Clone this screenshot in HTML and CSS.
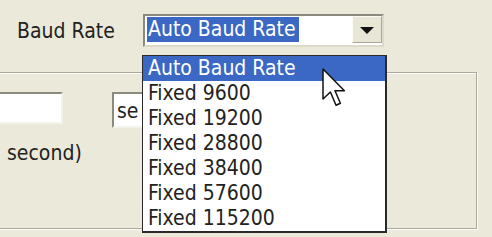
FILE: index.html
```html
<!DOCTYPE html>
<html lang="en">
<head>
    <meta charset="UTF-8">
    <title>Baud Rate</title>
    <link rel="stylesheet" href="styles.css">
</head>
<body>
    <div class="window">
        <div class="field-row">
            <span class="label">Baud Rate</span>
            <div class="combo">
                <div class="combo-text"><span class="selected">Auto Baud Rate</span></div>
                <div class="combo-btn"><span class="arrow"></span></div>
                <ul class="combo-list">
                    <li class="active">Auto Baud Rate</li>
                    <li>Fixed 9600</li>
                    <li>Fixed 19200</li>
                    <li>Fixed 28800</li>
                    <li>Fixed 38400</li>
                    <li>Fixed 57600</li>
                    <li>Fixed 115200</li>
                </ul>
            </div>
        </div>

        <div class="group">
            <div class="inputs">
                <div class="textbox"></div>
                <div class="selectbox">se</div>
            </div>
            <div class="units">second)</div>
        </div>

        <svg class="cursor" width="24" height="40" viewBox="0 0 12 20">
            <polygon points="0.5,0.5 0.5,15.5 4.2,12 7,18.6 9.2,17.6 6.5,11.4 11.2,11.4" fill="#fff" stroke="#111" stroke-width="0.75" stroke-linejoin="round"/>
        </svg>
    </div>
</body>
</html>
```

FILE: styles.css
```css
body {
    margin: 0;
    background: #ebe9d9;
    font-family: "DejaVu Sans Condensed", "Liberation Sans", sans-serif;
    font-size: 21px;
    color: #222;
    overflow: hidden;
}

.window {
    position: relative;
    width: 492px;
    height: 237px;
    overflow: hidden;
}

.field-row {
    display: flex;
    align-items: center;
    padding: 14px 0 0 17px;
}

.label {
    width: 126px;
    line-height: 24px;
}

.combo {
    position: relative;
    display: flex;
    width: 241px;
    height: 33px;
    box-sizing: border-box;
    border: 2px solid;
    border-color: #8c8a7e #dcdacb #dcdacb #8c8a7e;
    background: #fff;
}

.combo-text {
    flex: 1;
    padding: 1px 2px;
}

.selected {
    display: inline-block;
    height: 25px;
    line-height: 25px;
    padding: 0 3px 0 1px;
    background: #3a68c4;
    color: #fff;
}

.combo-btn {
    width: 30px;
    margin: 0 0 2px;
    box-sizing: border-box;
    border: 1px solid;
    border-color: #fbfaf3 #a9a698 #a9a698 #fbfaf3;
    background: #e8e6d6;
    display: flex;
    align-items: center;
    justify-content: center;
}

.arrow {
    width: 0;
    height: 0;
    border-left: 7px solid transparent;
    border-right: 7px solid transparent;
    border-top: 7px solid #111;
    margin-top: 2px;
}

.combo-list {
    position: absolute;
    top: 39px;
    left: -3px;
    width: 245px;
    margin: 0;
    padding: 0;
    list-style: none;
    box-sizing: border-box;
    background: #fff;
    border: 1px solid #2a2a2a;
    border-right-width: 2px;
    border-bottom-width: 2px;
    z-index: 2;
}

.combo-list li {
    height: 25px;
    line-height: 25px;
    padding-left: 5px;
}

.combo-list li.active {
    background: #3a68c4;
    color: #fff;
}

.group {
    margin: 25px 0 0 -30px;
    width: 507px;
    height: 157px;
    box-sizing: border-box;
    border: 1px solid #aca899;
    box-shadow: inset 1px 1px #fff, 1px 1px #fff;
    padding-top: 19px;
}

.inputs {
    display: flex;
    align-items: flex-start;
}

.textbox {
    width: 92px;
    height: 32px;
    box-sizing: border-box;
    background: #fff;
    border: 2px solid;
    border-color: #8c8a7e #f4f3ea #f4f3ea #8c8a7e;
}

.selectbox {
    margin-left: 49px;
    width: 60px;
    height: 36px;
    box-sizing: border-box;
    background: #fff;
    border: 2px solid;
    border-color: #8c8a7e #f4f3ea #f4f3ea #8c8a7e;
    padding: 5px 0 0 3px;
    line-height: 24px;
}

.units {
    margin: 13px 0 0 36px;
    line-height: 24px;
}

.cursor {
    position: absolute;
    left: 322px;
    top: 68px;
    z-index: 3;
}
```
